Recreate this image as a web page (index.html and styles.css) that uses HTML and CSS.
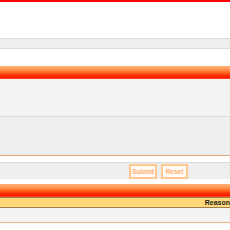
FILE: index.html
```html
<!DOCTYPE html>
<html>
<head>
<meta charset="utf-8">
<link rel="stylesheet" href="styles.css">
</head>
<body>
<div class="topline"></div>
<div class="spacer-top"></div>
<div class="navbar"></div>
<div class="spacer-mid"></div>
<div class="head-bar"></div>
<div class="panel">
  <div class="panel-top"></div>
  <div class="panel-body"></div>
</div>
<div class="gap"></div>
<div class="actions">
  <button class="btn btn-submit" type="button">Submit</button>
  <button class="btn btn-reset" type="button">Reset</button>
</div>
<div class="gap2"></div>
<div class="head-bar"></div>
<div class="table-head"><span class="th">Reason</span></div>
<div class="table-row"></div>
</body>
</html>
```
FILE: styles.css
```css
html, body {
  margin: 0;
  padding: 0;
  background: #ffffff;
  font-family: "Liberation Sans", Arial, sans-serif;
  width: 230px;
  overflow: hidden;
}
.topline {
  height: 2px;
  background: #ff0000;
}
.spacer-top {
  height: 36px;
}
.navbar {
  height: 9px;
  background: #eeeeee;
  border-top: 1px solid #dddddd;
  border-bottom: 1px solid #dddddd;
}
.spacer-mid {
  height: 17px;
}
.head-bar {
  height: 13px;
  background: linear-gradient(to bottom, #ffb27a 0%, #ff9a55 25%, #ff6a20 50%, #ff2a00 75%, #ff1a00 92%, #ff6030 100%);
}
.panel-top {
  height: 37px;
  background: #f3f3f3;
  border-bottom: 1px solid #dddddd;
}
.panel-body {
  height: 38px;
  background: #efefef;
  border-bottom: 1px solid #e0a878;
}
.gap {
  height: 6px;
}
.actions {
  height: 16px;
  background: #eeeeee;
  border-top: 1px solid #dddddd;
  display: flex;
  justify-content: flex-start;
  align-items: center;
  gap: 4px;
  padding-left: 129px;
}
.btn {
  margin: 0;
  padding: 0;
  height: 15px;
  font-family: "Liberation Sans", Arial, sans-serif;
  font-size: 6.5px;
  font-weight: bold;
  color: #ffb070;
  background: #fffaf4;
  border: 2px solid #ffc890;
  line-height: 11px;
  text-align: center;
}
.btn-submit {
  width: 28px;
}
.btn-reset {
  width: 27px;
}
.gap2 {
  height: 5px;
}
.table-head {
  height: 9px;
  background: #ffd97a;
  border-top: 1px solid #a08050;
  border-bottom: 1px solid #a08050;
  display: flex;
  justify-content: flex-end;
  align-items: center;
}
.th {
  font-size: 7px;
  font-weight: bold;
  color: #222222;
  line-height: 9px;
}
.table-row {
  height: 14px;
  background: #f3f3f3;
  border-bottom: 1px solid #f0b080;
}
```
